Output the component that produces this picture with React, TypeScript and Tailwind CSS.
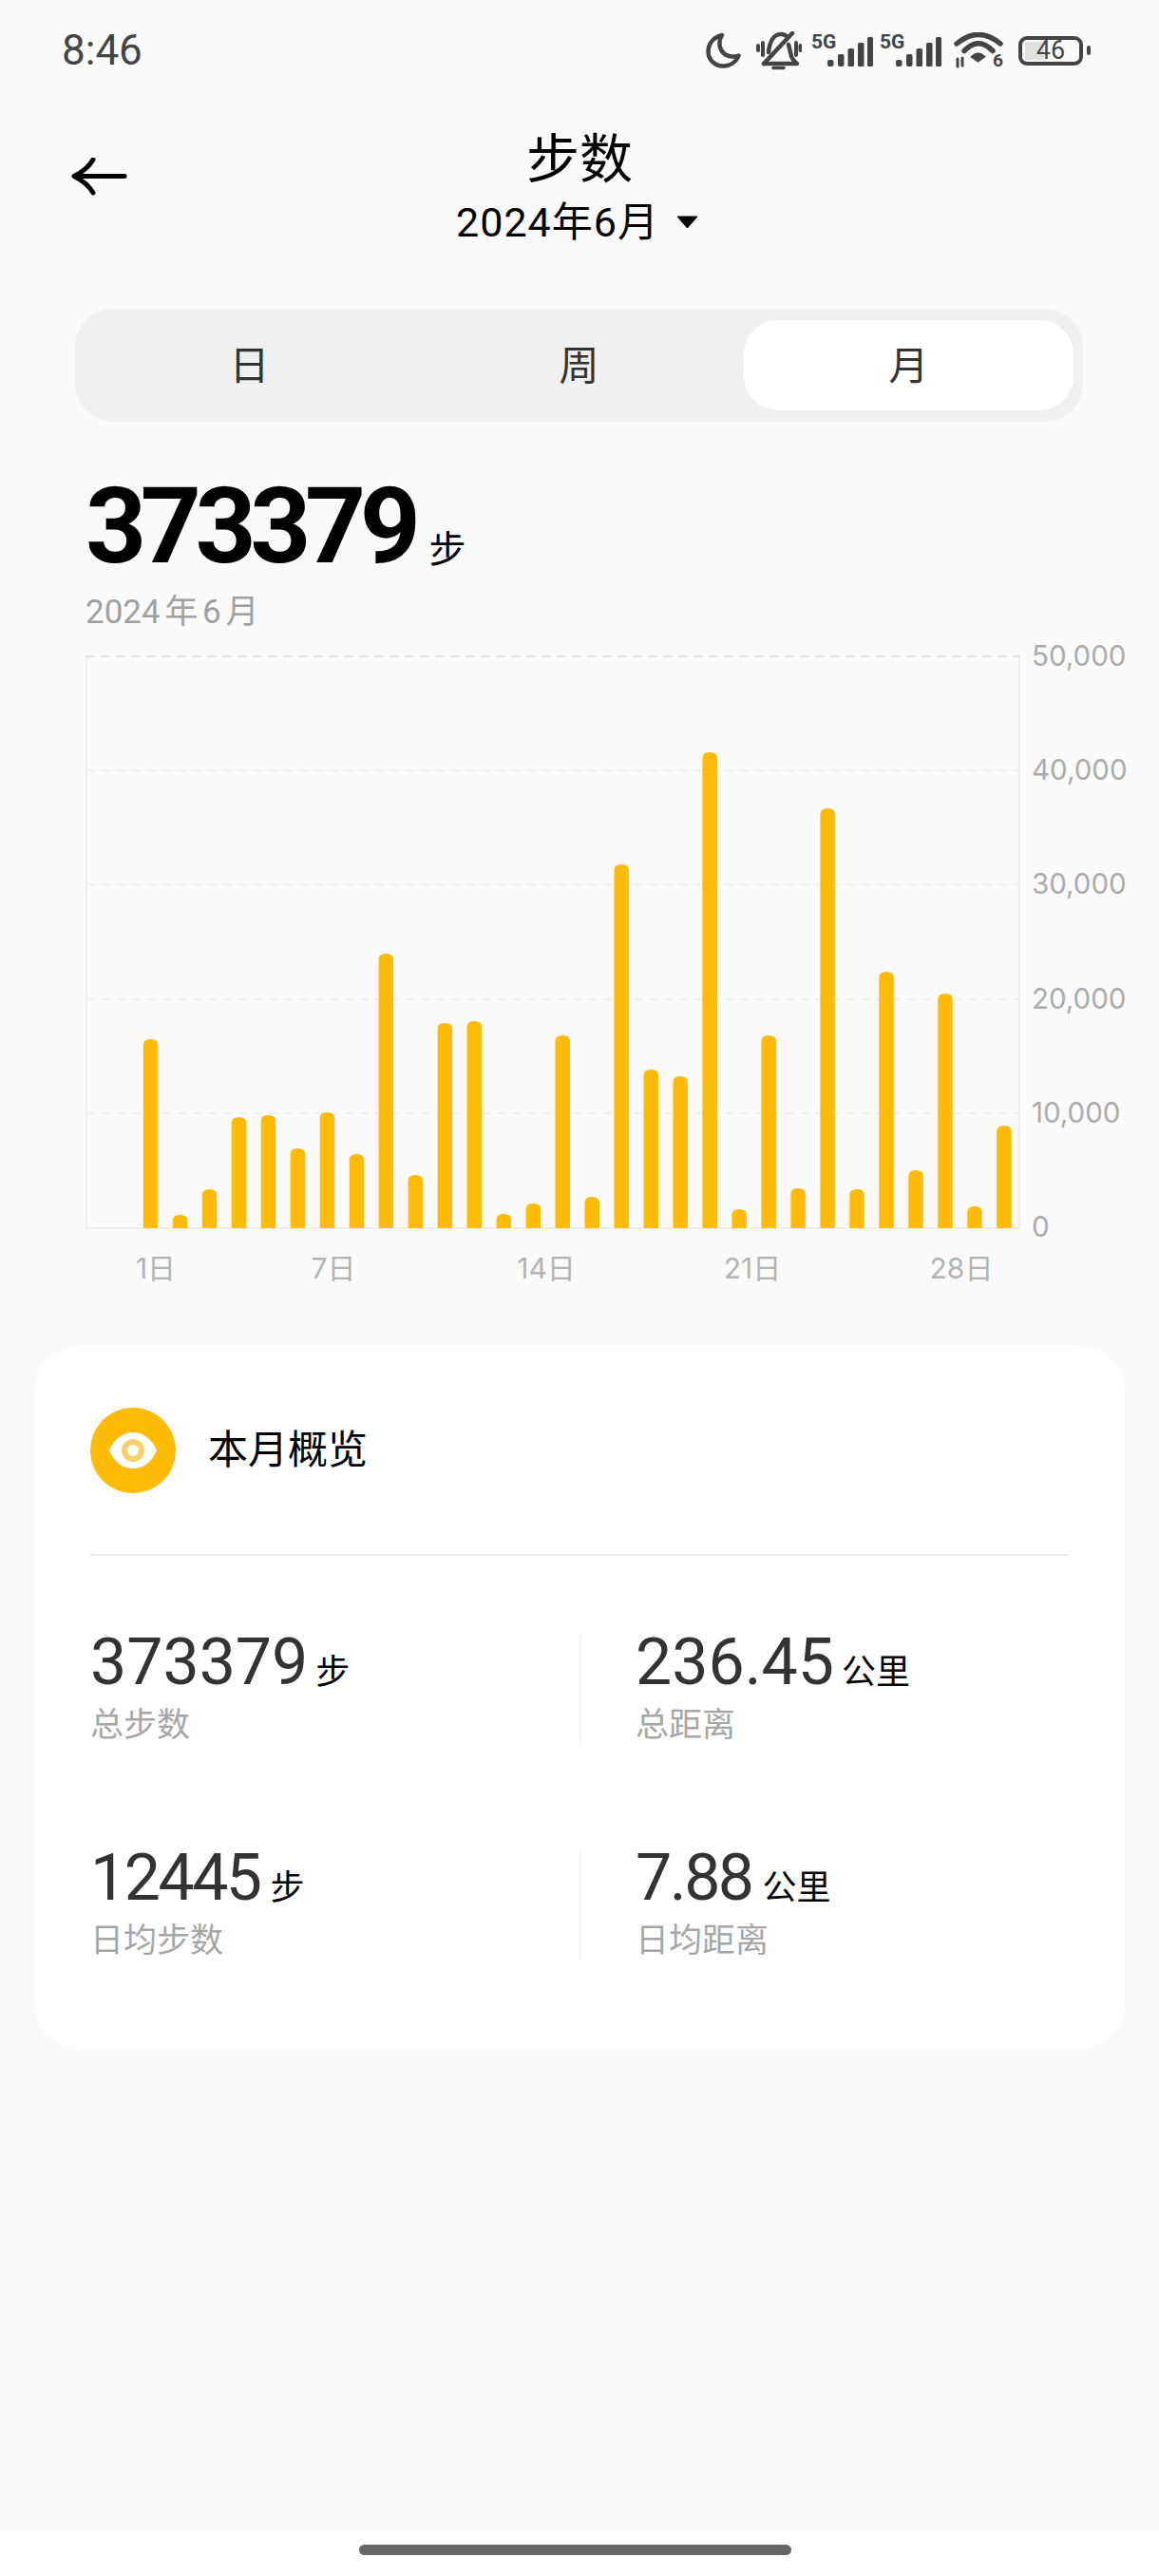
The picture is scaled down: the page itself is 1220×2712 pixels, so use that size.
import React from "react";

const BAR_TOPS = [
  1095, 1280, 1253, 1177, 1175, 1210, 1172, 1216, 1005, 1238, 1078, 1076, 1279, 1268, 1091,
  1261, 911, 1127, 1134, 793, 1274, 1091, 1252, 852, 1253, 1024, 1233, 1047, 1271, 1186,
];
const Y_LABELS = ["50,000", "40,000", "30,000", "20,000", "10,000", "0"];
const X_LABELS = [
  { text: "1日", x: 74 },
  { text: "7日", x: 261 },
  { text: "14日", x: 485 },
  { text: "21日", x: 702 },
  { text: "28日", x: 922 },
];

const Moon = () => (
  <svg width="37" height="38" viewBox="0 0 37 38" fill="none" stroke="#444" strokeWidth="4.500" strokeLinejoin="round">
    <path d="M17 3C8 5.500 2.500 12 2.500 20.500C2.500 29 9.500 35.500 18 35.500C26 35.500 32 31 34.500 24.500C26 27.500 17.500 24 15 16C13.800 11 14.500 6.500 17 3Z" />
  </svg>
);

const BellOff = () => (
  <svg width="48" height="41" viewBox="0 0 48 41" fill="none" stroke="#444" strokeLinecap="round" strokeLinejoin="round">
    <g strokeWidth="4.500">
      <path d="M38 2L8 34" />
      <path d="M8 34H43C39 31 37 28 36.500 24L34 14" />
      <path d="M13 22C14 12 18 3 26 3C29 3 31 4 33 6" />
    </g>
    <path d="M18 38.500H29" strokeWidth="3.500" />
    <path d="M2 15V20M7 12V25M42 12V25M46.500 15V20" strokeWidth="4" />
  </svg>
);

const Signal = () => (
  <div className="relative h-[34px] w-[65px]">
    <svg width="65" height="34" viewBox="0 0 65 34" fill="#444">
      <rect x="17" y="27" width="6.500" height="7" rx="2" />
      <rect x="28" y="21" width="6.500" height="13" rx="2" />
      <rect x="38.500" y="15" width="6.500" height="19" rx="1.500" />
      <rect x="49" y="9" width="6.500" height="25" rx="1.500" />
      <rect x="59" y="3" width="6" height="31" rx="1.500" />
    </svg>
    <span className="absolute left-0 top-0 text-[21px] font-bold leading-[16px] text-[#444]">5G</span>
  </div>
);

const Wifi = () => (
  <div className="relative h-[38px] w-[52px]">
    <svg width="52" height="38" viewBox="0 0 52 38" fill="none" stroke="#444" strokeLinecap="round">
      <path d="M3 12Q26 -7 49 12" strokeWidth="5.500" />
      <path d="M11 19.500Q26 4 41 19.500" strokeWidth="5.500" />
      <path d="M18 25.700Q25.700 18 33.300 25.700L25.700 31Z" fill="#444" stroke="#444" strokeWidth="1" strokeLinejoin="round" />
      <path d="M4 28V36M9 27V35" strokeWidth="3" />
    </svg>
    <span className="absolute bottom-0 right-0 text-[19px] font-bold leading-[16px] text-[#444]">6</span>
  </div>
);

const Battery = () => (
  <div className="flex items-center gap-[4px]">
    <div className="relative flex h-[31px] w-[68px] items-center justify-center rounded-[9px] border-[4px] border-[#444]">
      <div className="absolute left-[3px] top-[2px] h-[19px] w-[20px] rounded-[3px] bg-[#e0e0e0]" />
      <span className="relative text-[27px] leading-none text-[#444]">46</span>
    </div>
    <div className="h-[10px] w-[4px] rounded-full bg-[#444]" />
  </div>
);

const StatusBar = () => (
  <div className="flex h-[106px] items-center justify-between pl-[65px] pr-[72px]">
    <span className="text-[44px] leading-none text-[#444]">8:46</span>
    <div className="flex items-center">
      <Moon />
      <div className="ml-[16px]"><BellOff /></div>
      <div className="ml-[10px]"><Signal /></div>
      <div className="ml-[7px]"><Signal /></div>
      <div className="ml-[13px]"><Wifi /></div>
      <div className="ml-[16px]"><Battery /></div>
    </div>
  </div>
);

const Header = () => (
  <div className="relative mt-[26px] flex flex-col items-center">
    <button className="absolute left-[75px] top-[34px]">
      <svg width="60" height="40" viewBox="0 0 60 40" fill="none" stroke="#000" strokeWidth="5" strokeLinecap="round" strokeLinejoin="round">
        <path d="M4 19.500H56" />
        <path d="M23 2C19 9 12 15 3 19.500C12 24 19 30 23 37" />
      </svg>
    </button>
    <div className="text-[56px] leading-[72px] text-black">步数</div>
    <div className="mt-[4px] flex items-center pr-[5px] text-[43px] leading-[52px] tracking-[1px] text-black">
      <span>2024年6月</span>
      <svg className="ml-[18px]" width="23" height="14" viewBox="0 0 23 14" fill="#000">
        <path d="M1 1H22L11.500 13Z" strokeLinejoin="round" stroke="#000" strokeWidth="1" />
      </svg>
    </div>
  </div>
);

const Tabs = () => (
  <div className="ml-[79px] mt-[65px] grid h-[119px] w-[1061px] grid-cols-3 rounded-[40px] bg-[#f0f0f0] px-[10px] py-[12px] text-[42px] text-[#333]">
    <div className="flex items-center justify-center pt-[2px]">日</div>
    <div className="flex items-center justify-center pt-[2px]">周</div>
    <div className="flex items-center justify-center rounded-[36px] bg-white pt-[2px]">月</div>
  </div>
);

const Summary = () => (
  <div className="ml-[90px] mt-[60px]">
    <div className="flex items-baseline">
      <span className="text-[112px] font-bold leading-[100px] tracking-[-6.500px] text-black">373379</span>
      <span className="ml-[15px] text-[39px] leading-none text-black">步</span>
    </div>
    <div className="mt-[17px] text-[35px] leading-[48px] text-[#a0a0a0] [word-spacing:-4px]">2024 年 6 月</div>
  </div>
);

const Chart = () => (
  <div className="mt-[5px]">
    <div className="flex items-start pl-[90px]">
      <svg className="mt-[16px]" width="984" height="604" viewBox="0 0 984 604">
        <path d="M1 0V604M983 0V604" stroke="#eeeeee" strokeWidth="2" />
        <path d="M0 1H984" stroke="#e4e4e4" strokeWidth="2" strokeDasharray="10 6" />
        {[121, 241, 362, 482].map((y) => (
          <path key={y} d={`M0 ${y}H984`} stroke="#f0f0f0" strokeWidth="2" strokeDasharray="10 6" />
        ))}
        <path d="M0 603H984" stroke="#eeeeee" strokeWidth="2" />
        {BAR_TOPS.map((top, i) => {
          const left = 60.8 + i * 30.98;
          const y = top - 691;
          return (
            <path
              key={i}
              d={`M${left} 603V${y + 6}Q${left} ${y} ${left + 7.75} ${y}Q${left + 15.5} ${y} ${left + 15.5} ${y + 6}V603Z`}
              fill="#ffbb05"
            />
          );
        })}
      </svg>
      <div className="ml-[12px] mt-[1px] flex h-[631px] flex-col justify-between text-[29.500px] leading-[30px] text-[#ababab] [font-family:Inter,sans-serif]">
        {Y_LABELS.map((label) => (
          <span key={label}>{label}</span>
        ))}
      </div>
    </div>
    <div className="relative ml-[90px] mt-[9px] h-[40px] text-[30px] leading-[40px] text-[#b3b3b3] [font-family:Inter,'Noto_Sans_CJK_SC',sans-serif]">
      {X_LABELS.map((label) => (
        <span key={label.text} className="absolute top-0 -translate-x-1/2" style={{ left: label.x }}>
          {label.text}
        </span>
      ))}
    </div>
  </div>
);

const Stat = ({
  value,
  unit,
  label,
  right,
  tight,
}: {
  value: string;
  unit: string;
  label: string;
  right?: boolean;
  tight?: boolean;
}) => (
  <div className={right ? "h-[113px] border-l-2 border-[#f4f4f4] pl-[57px]" : "h-[113px]"}>
    <div className="flex h-[56px] items-end">
      <span className={tight ? "text-[68px] leading-[56px] tracking-[-2.500px] text-[#333]" : "text-[68px] leading-[56px] text-[#333]"}>
        {value}
      </span>
      <span className={tight ? "mb-[-3px] ml-[11px] text-[36px] leading-[40px] text-black" : "mb-[-3px] ml-[8px] text-[36px] leading-[40px] text-black"}>
        {unit}
      </span>
    </div>
    <div className="mt-[19px] text-[35px] leading-[40px] text-[#a6a6a6]">{label}</div>
  </div>
);

const OverviewCard = () => (
  <div className="ml-[36px] mt-[62px] h-[740px] w-[1148px] rounded-[48px] bg-white px-[59px] pt-[65px]">
    <div className="flex items-center gap-[34px]">
      <div className="flex h-[90px] w-[90px] items-center justify-center rounded-full bg-[#ffbb05]">
        <svg width="50" height="38" viewBox="0 0 50 38">
          <path d="M0 19C5 7 14 0 25 0C36 0 45 7 50 19C45 31 36 38 25 38C14 38 5 31 0 19Z" fill="#fff" />
          <circle cx="25" cy="19" r="9" fill="none" stroke="#f8d06a" strokeWidth="6" />
        </svg>
      </div>
      <span className="text-[42px] leading-none text-black">本月概览</span>
    </div>
    <div className="mt-[64px] h-[2px] bg-[#ececec]" />
    <div className="mt-[84px] grid grid-cols-[515px_1fr] gap-y-[114px]">
      <Stat value="373379" unit="步" label="总步数" />
      <Stat value="236.45" unit="公里" label="总距离" right />
      <Stat value="12445" unit="步" label="日均步数" tight />
      <Stat value="7.88" unit="公里" label="日均距离" right tight />
    </div>
  </div>
);

const App: React.FC = () => {
  return (
    <div className="flex h-[2712px] w-[1220px] flex-col overflow-hidden bg-[#fafafa] [font-family:Roboto,'Noto_Sans_CJK_SC',sans-serif]">
      <div className="flex-1">
        <StatusBar />
        <Header />
        <Tabs />
        <Summary />
        <Chart />
        <OverviewCard />
      </div>
      <div className="h-[48px] bg-white pl-[378px] pt-[15px]">
        <div className="h-[11px] w-[455px] rounded-full bg-[#666]" />
      </div>
    </div>
  );
};

export default App;
